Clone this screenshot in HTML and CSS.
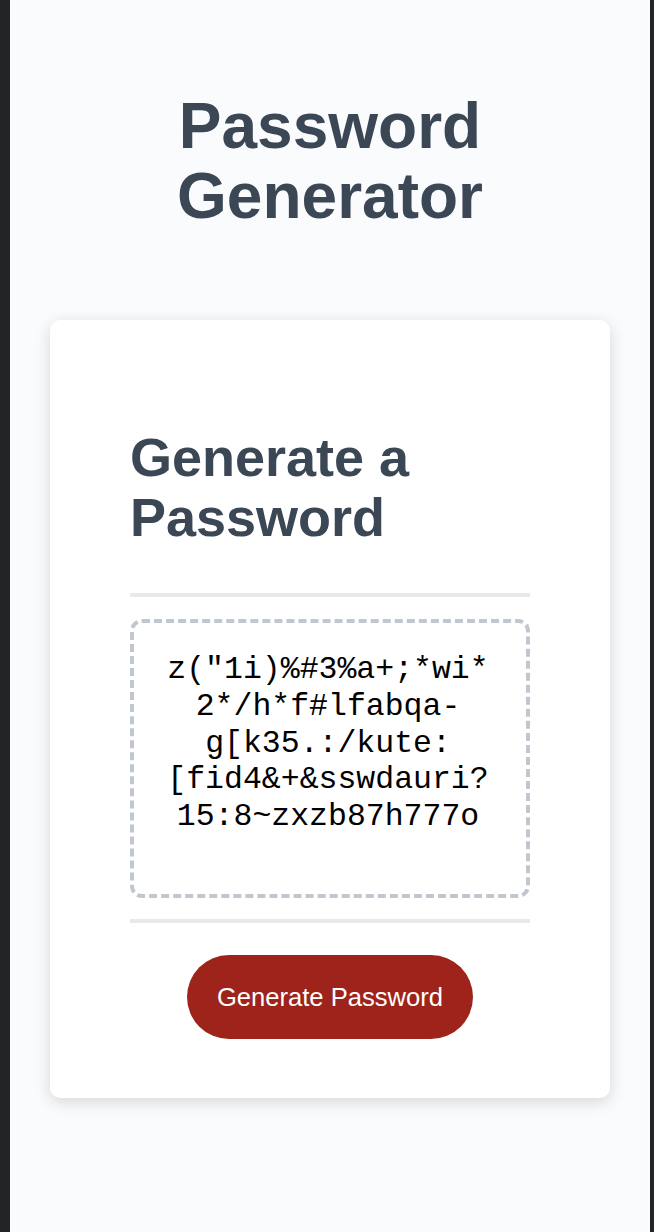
FILE: index.html
```html
<!DOCTYPE html>
<html lang="en">
<head>
<meta charset="UTF-8">
<title>Password Generator</title>
<link rel="stylesheet" href="styles.css">
</head>
<body>
<div class="wrapper">
  <header class="header">
    <h1 class="title">Password Generator</h1>
  </header>
  <div class="card">
    <div class="card-header">
      <h2 class="card-title">Generate a Password</h2>
    </div>
    <div class="card-body">
      <div class="password" role="textbox" aria-readonly="true" aria-label="Generated Password">
        <span class="pw-line">z("1i)%#3%a+;*wi*</span>
        <span class="pw-line">2*/h*f#lfabqa-</span>
        <span class="pw-line">g[k35.:/kute:</span>
        <span class="pw-line">[fid4&amp;+&amp;sswdauri?</span>
        <span class="pw-line">15:8~zxzb87h777o</span>
      </div>
    </div>
    <div class="card-footer">
      <button class="btn" type="button">Generate Password</button>
    </div>
  </div>
</div>
</body>
</html>
```
FILE: styles.css
```css
* { box-sizing: border-box; }

html, body {
  margin: 0;
  padding: 0;
  height: 100%;
}

body {
  background: #232425;
  font-family: "Liberation Sans", Arial, Helvetica, sans-serif;
}

.wrapper {
  margin: 0 4px 0 10px;
  min-height: 1232px;
  background: #f9fbfd;
  padding: 91px 40px 0 40px;
}

.header {
  text-align: center;
  padding-bottom: 89px;
}

.title {
  margin: 0;
  font-size: 64px;
  line-height: 70px;
  font-weight: 700;
  color: #3b4754;
}

.card {
  background: #ffffff;
  border-radius: 10px;
  box-shadow: rgba(0, 0, 0, 0.15) 0 4px 16px 0;
  color: #3b4754;
  padding: 60px 80px 59px 80px;
}

.card-title {
  margin: 47px 0 0 0;
  font-size: 54px;
  line-height: 60px;
  font-weight: 700;
  color: #3b4754;
}

.card-header::after {
  content: "";
  display: block;
  height: 4px;
  background: #e7e9eb;
  margin-top: 46px;
}

.card-body {
  padding: 22px 0 21px 0;
}

.password {
  height: 279px;
  border: 4px dashed #c0c7cf;
  border-radius: 12px;
  padding: 29px 32px 0 28px;
  font-family: "Liberation Mono", "Courier New", monospace;
  font-size: 31.5px;
  line-height: 36.8px;
  color: #000000;
  text-align: center;
  overflow: hidden;
}

.pw-line {
  display: block;
  white-space: pre;
}

.card-footer {
  text-align: center;
}

.card-footer::before {
  content: "";
  display: block;
  height: 4px;
  background: #e7e9eb;
}

.btn {
  border: none;
  background: #9e231a;
  color: #ffffff;
  font-family: "Liberation Sans", Arial, Helvetica, sans-serif;
  font-size: 25.6px;
  line-height: 44px;
  padding: 20px 30px;
  border-radius: 42px;
  margin: 32px 0 0 0;
  cursor: pointer;
}
```
